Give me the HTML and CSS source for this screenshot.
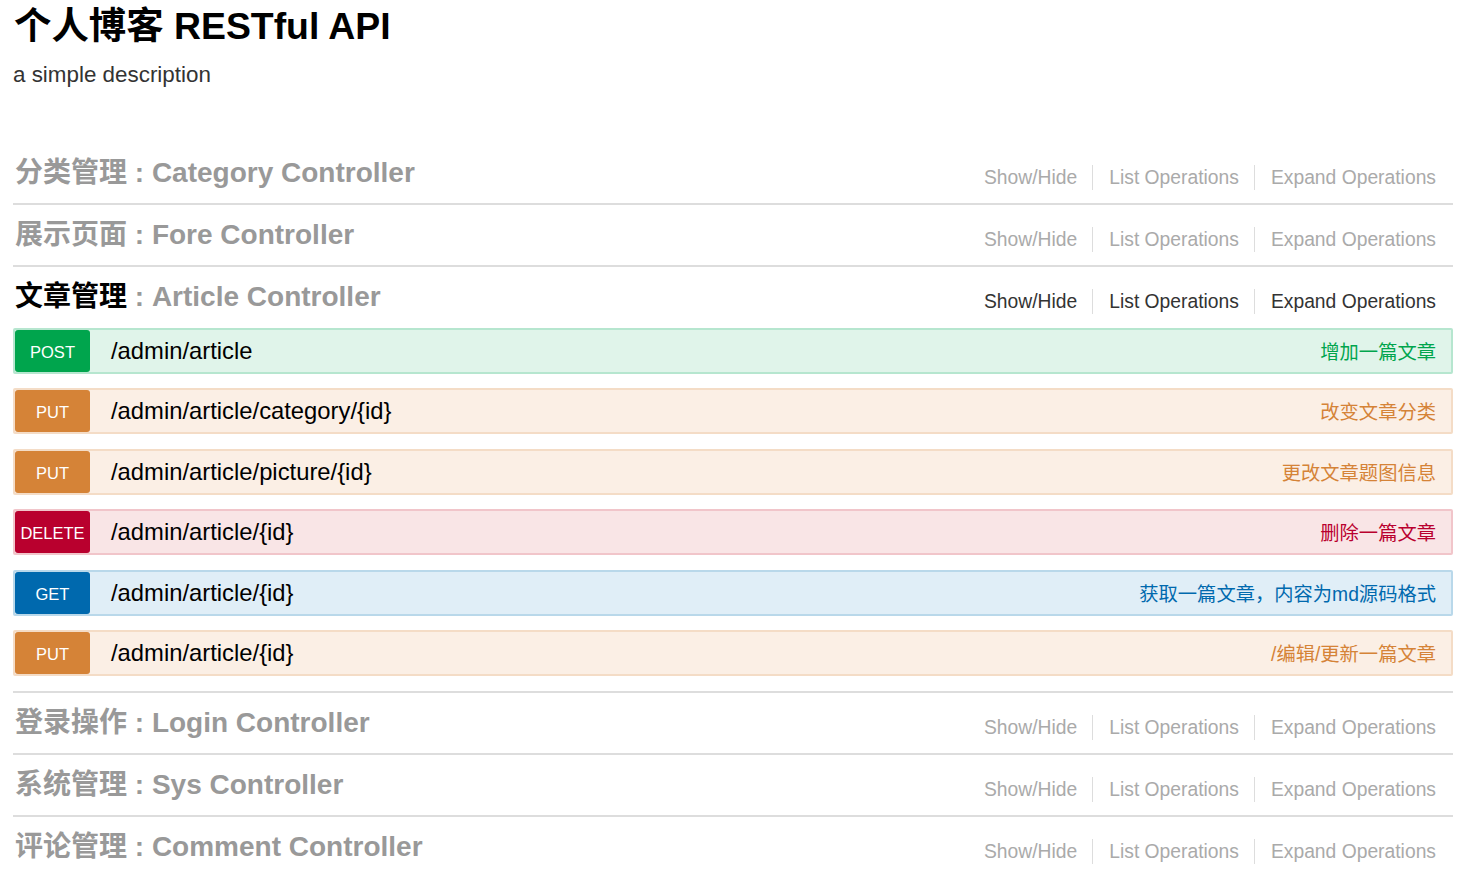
FILE: index.html
```html
<!DOCTYPE html>
<html lang="zh-CN">
<head>
<meta charset="utf-8">
<title>个人博客 RESTful API</title>
<link rel="stylesheet" href="styles.css">
</head>
<body>
<div class="page">
  <div class="info">
    <h1 class="info-title">个人博客 RESTful API</h1>
    <p class="info-desc">a simple description</p>
  </div>

  <ul class="resources">
    <li class="resource">
      <div class="heading">
        <h2 class="heading-title"><span class="tag">分类管理</span> : Category Controller</h2>
        <ul class="options">
          <li class="opt">Show/Hide</li>
          <li class="opt">List Operations</li>
          <li class="opt">Expand Operations</li>
        </ul>
      </div>
    </li>

    <li class="resource">
      <div class="heading">
        <h2 class="heading-title"><span class="tag">展示页面</span> : Fore Controller</h2>
        <ul class="options">
          <li class="opt">Show/Hide</li>
          <li class="opt">List Operations</li>
          <li class="opt">Expand Operations</li>
        </ul>
      </div>
    </li>

    <li class="resource active">
      <div class="heading">
        <h2 class="heading-title"><span class="tag">文章管理</span> : Article Controller</h2>
        <ul class="options">
          <li class="opt">Show/Hide</li>
          <li class="opt">List Operations</li>
          <li class="opt">Expand Operations</li>
        </ul>
      </div>
      <ul class="operations">
        <li class="op post">
          <span class="method">POST</span>
          <span class="path">/admin/article</span>
          <span class="summary">增加一篇文章</span>
        </li>
        <li class="op put">
          <span class="method">PUT</span>
          <span class="path">/admin/article/category/{id}</span>
          <span class="summary">改变文章分类</span>
        </li>
        <li class="op put">
          <span class="method">PUT</span>
          <span class="path">/admin/article/picture/{id}</span>
          <span class="summary">更改文章题图信息</span>
        </li>
        <li class="op delete">
          <span class="method">DELETE</span>
          <span class="path">/admin/article/{id}</span>
          <span class="summary">删除一篇文章</span>
        </li>
        <li class="op get">
          <span class="method">GET</span>
          <span class="path">/admin/article/{id}</span>
          <span class="summary">获取一篇文章，内容为md源码格式</span>
        </li>
        <li class="op put">
          <span class="method">PUT</span>
          <span class="path">/admin/article/{id}</span>
          <span class="summary">/编辑/更新一篇文章</span>
        </li>
      </ul>
    </li>

    <li class="resource">
      <div class="heading">
        <h2 class="heading-title"><span class="tag">登录操作</span> : Login Controller</h2>
        <ul class="options">
          <li class="opt">Show/Hide</li>
          <li class="opt">List Operations</li>
          <li class="opt">Expand Operations</li>
        </ul>
      </div>
    </li>

    <li class="resource">
      <div class="heading">
        <h2 class="heading-title"><span class="tag">系统管理</span> : Sys Controller</h2>
        <ul class="options">
          <li class="opt">Show/Hide</li>
          <li class="opt">List Operations</li>
          <li class="opt">Expand Operations</li>
        </ul>
      </div>
    </li>

    <li class="resource">
      <div class="heading">
        <h2 class="heading-title"><span class="tag">评论管理</span> : Comment Controller</h2>
        <ul class="options">
          <li class="opt">Show/Hide</li>
          <li class="opt">List Operations</li>
          <li class="opt">Expand Operations</li>
        </ul>
      </div>
    </li>
  </ul>
</div>
</body>
</html>
```

FILE: styles.css
```css
* {
  box-sizing: border-box;
}

html, body {
  margin: 0;
  padding: 0;
  background: #fff;
}

body {
  font-family: "Liberation Sans", "Noto Sans CJK SC", Arial, sans-serif;
  color: #000;
}

.page {
  padding: 0 9px 0 13px;
}

ul {
  list-style: none;
  margin: 0;
  padding: 0;
}

/* ---------- info ---------- */
.info-title {
  margin: 0;
  padding: 4px 0 0 1px;
  font-size: 37.4px;
  line-height: 44px;
  font-weight: bold;
  color: #000;
}

.info-desc {
  margin: 12px 0 0 0;
  font-size: 22.4px;
  line-height: 30px;
  color: #333;
}

.resources {
  margin-top: 53px;
}

/* ---------- resource heading ---------- */
.resource {
  border-bottom: 2px solid #ddd;
}

.heading {
  display: flex;
  align-items: flex-start;
  justify-content: space-between;
  height: 60px;
}

.heading-title {
  margin: 0;
  padding: 1px 0 0 2px;
  font-size: 28px;
  line-height: 58px;
  font-weight: bold;
  color: #999;
  white-space: nowrap;
}

.active .tag {
  color: #000;
}

.options {
  display: flex;
  padding: 22px 17px 0 0;
}

.opt {
  font-size: 19.3px;
  line-height: 25px;
  color: #aaa;
  padding: 0 15px 0 16px;
  border-left: 1px solid #ddd;
  white-space: nowrap;
}

.opt:first-child {
  border-left: none;
}

.opt:last-child {
  padding-right: 0;
}

.active .opt {
  color: #333;
}

/* ---------- operations ---------- */
.operations {
  padding: 1px 0 1px 0;
}

.op {
  display: flex;
  align-items: center;
  height: 46px;
  margin-bottom: 14.4px;
  border: 2px solid;
  border-radius: 2px;
}

.method {
  flex: none;
  width: 75px;
  height: 42px;
  padding-top: 2px;
  line-height: 40px;
  border-radius: 3px;
  color: #fff;
  font-size: 16.5px;
  text-align: center;
}

.path {
  margin-left: 21px;
  font-size: 23.8px;
  color: #000;
}

.summary {
  margin-left: auto;
  padding-right: 15px;
  font-size: 19.3px;
}

.post {
  background: #e0f4ea;
  border-color: #b6e6cf;
}
.post .method {
  background: #00a54d;
}
.post .summary {
  color: #00a54d;
}

.put {
  background: #fbefe5;
  border-color: #f4dcc6;
}
.put .method {
  background: #d58337;
}
.put .summary {
  color: #d58337;
}

.delete {
  background: #f9e5e6;
  border-color: #f1c5ca;
}
.delete .method {
  background: #b9002e;
}
.delete .summary {
  color: #b9002e;
}

.get {
  background: #e0eef7;
  border-color: #b9d8ea;
}
.get .method {
  background: #0069ae;
}
.get .summary {
  color: #0069ae;
}
```
